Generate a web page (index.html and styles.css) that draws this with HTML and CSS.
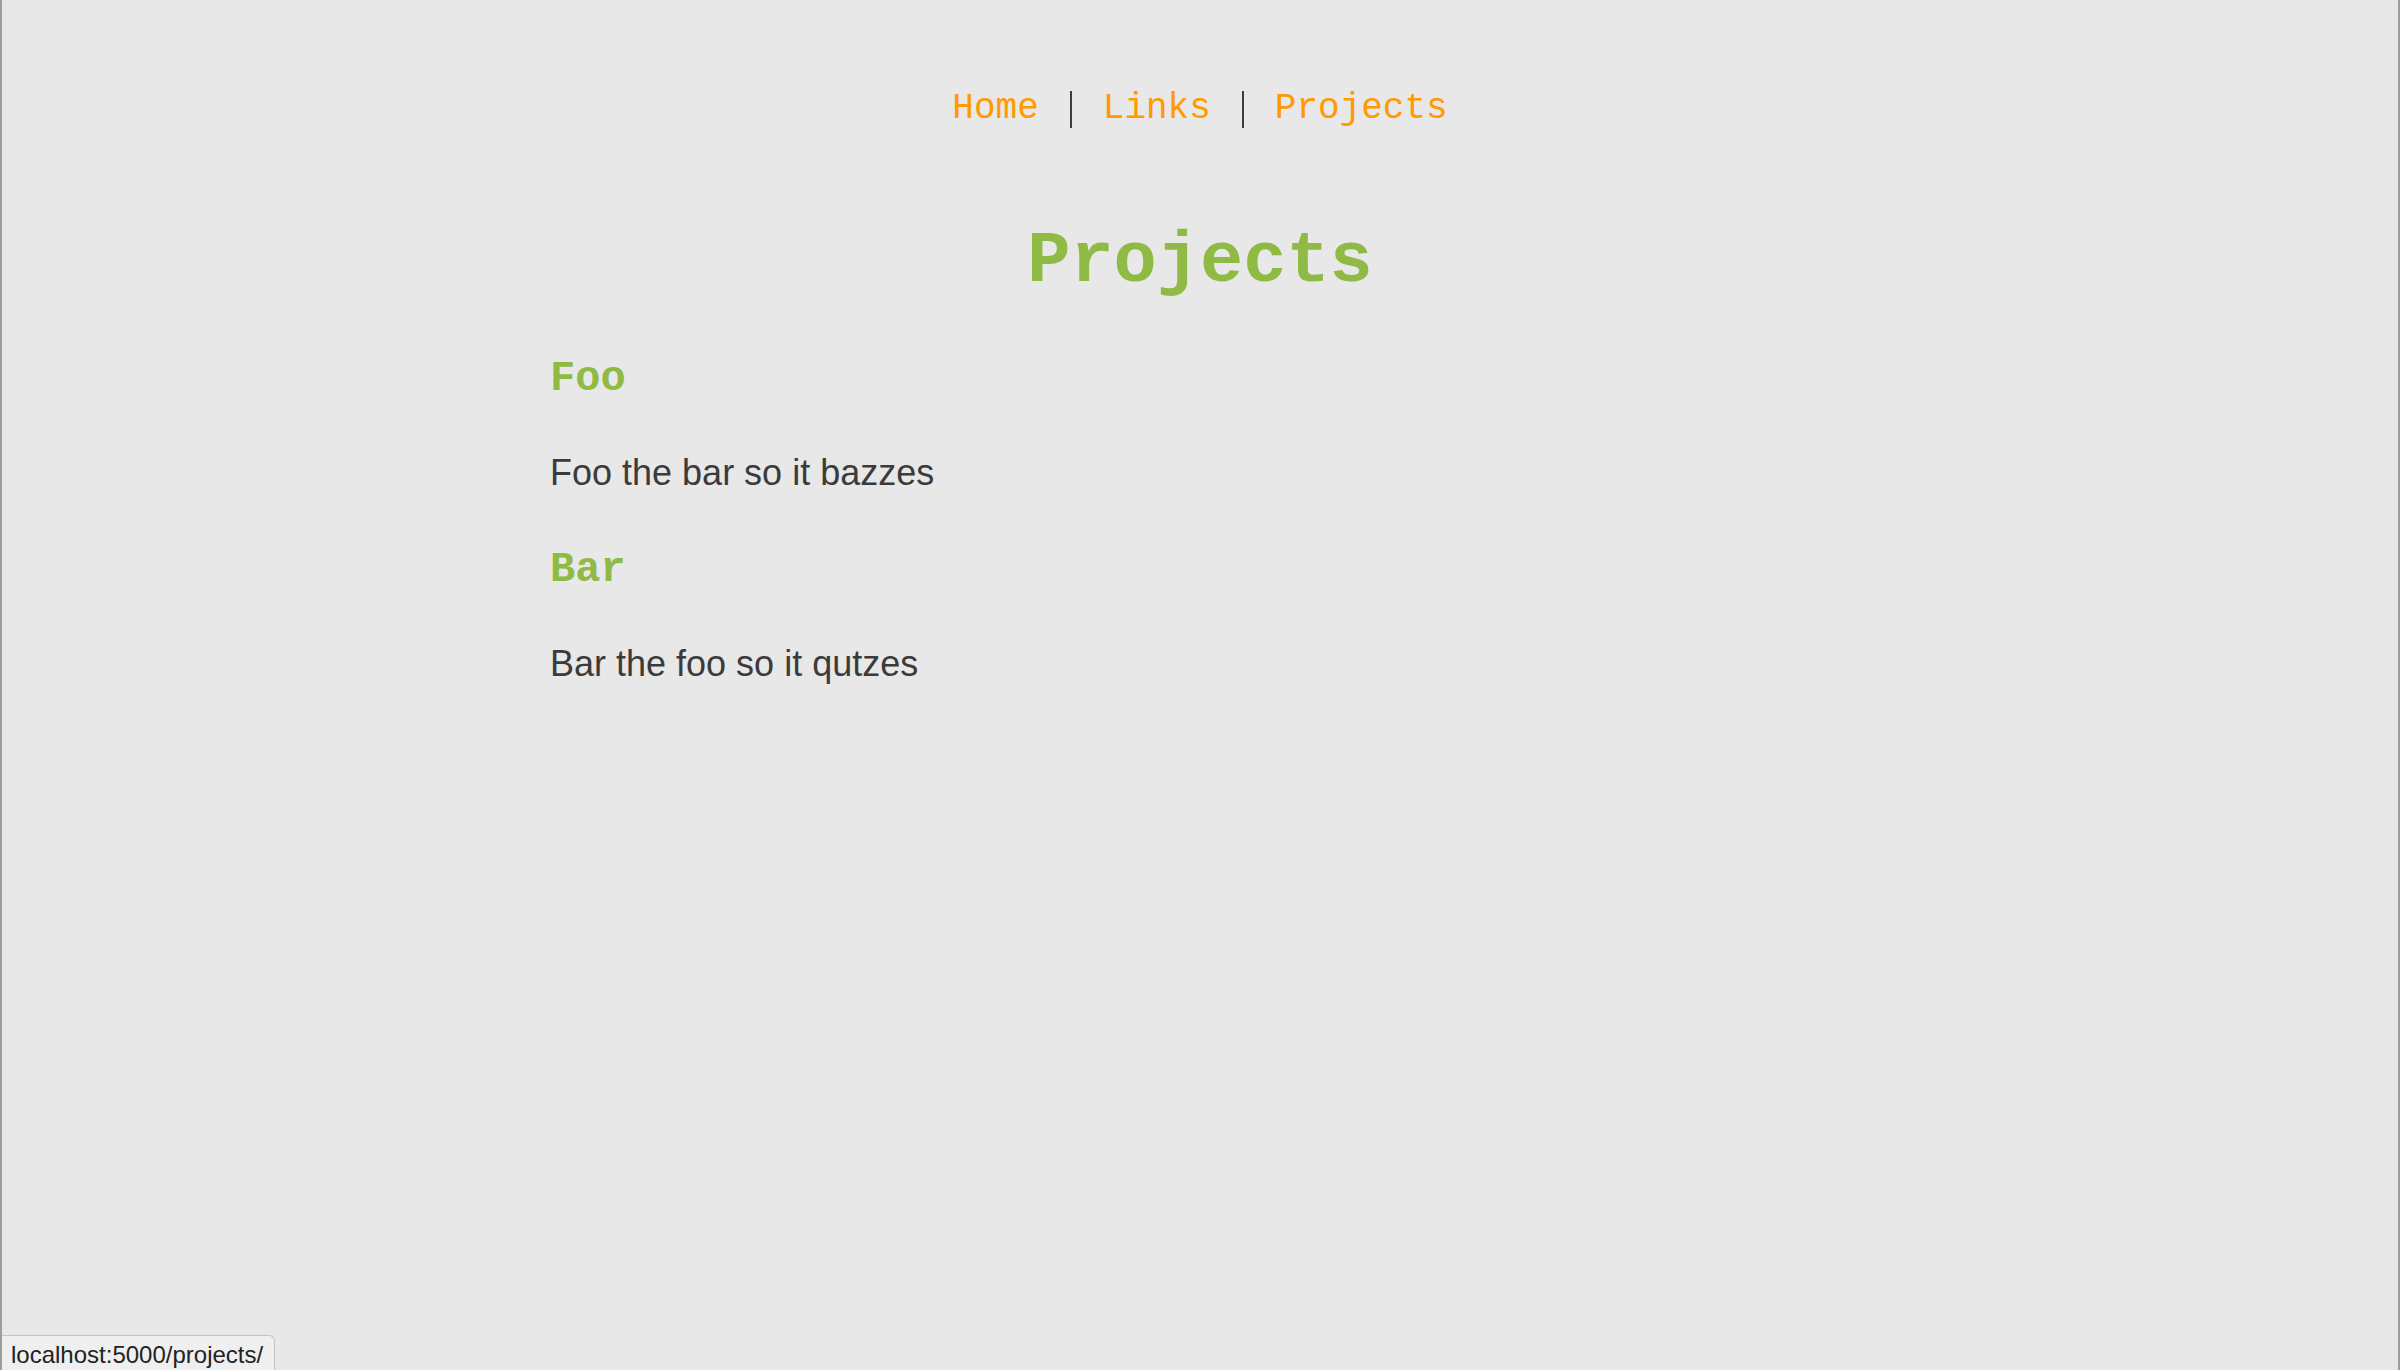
FILE: index.html
```html
<!DOCTYPE html>
<html lang="en">
<head>
<meta charset="utf-8">
<title>Projects</title>
<link rel="stylesheet" href="styles.css">
</head>
<body>
<div class="window">
  <div class="page">
    <nav class="nav">
      <a href="#">Home</a>
      <span class="sep"></span>
      <a href="#">Links</a>
      <span class="sep"></span>
      <a href="#">Projects</a>
    </nav>
    <h1 class="title">Projects</h1>
    <div class="projects">
      <section class="project">
        <h3 class="project-name">Foo</h3>
        <p class="project-desc">Foo the bar so it bazzes</p>
      </section>
      <section class="project">
        <h3 class="project-name">Bar</h3>
        <p class="project-desc">Bar the foo so it qutzes</p>
      </section>
    </div>
  </div>
</div>
<div class="status">localhost:5000/projects/</div>
</body>
</html>
```
FILE: styles.css
```css
html, body {
  margin: 0;
  padding: 0;
  background: #e8e8e8;
}

.window {
  box-sizing: border-box;
  min-height: 100vh;
  border-left: 2px solid #9d9d9d;
  border-right: 2px solid #9d9d9d;
  padding-top: 89px;
}

.page {
  width: 1300px;
  margin: 0 auto;
}

.nav {
  display: flex;
  justify-content: center;
  align-items: center;
  gap: 31px;
  font-family: "Liberation Mono", "Courier New", monospace;
  font-size: 36px;
  line-height: 40px;
}

.nav a {
  color: #ff9a00;
  text-decoration: none;
}

.sep {
  width: 2px;
  height: 37px;
  background: #3c3c3c;
}

.title {
  margin: 93px 0 0;
  text-align: center;
  font-family: "Liberation Mono", "Courier New", monospace;
  font-weight: bold;
  font-size: 72px;
  line-height: 80px;
  color: #8fbb45;
}

.projects {
  margin-top: 53px;
}

.project-name {
  margin: 0 0 50px;
  font-family: "Liberation Mono", "Courier New", monospace;
  font-weight: bold;
  font-size: 42px;
  line-height: 48px;
  color: #8fbb45;
}

.project-desc {
  margin: 0 0 53px;
  font-family: "Liberation Sans", Arial, sans-serif;
  font-size: 36px;
  line-height: 40px;
  color: #3b3b3b;
}

.status {
  position: fixed;
  left: 2px;
  bottom: 0;
  padding: 4px 11px 0 9px;
  line-height: 30px;
  font-family: "Liberation Sans", Arial, sans-serif;
  font-size: 24px;
  color: #222;
  background: #efefef;
  border: 1px solid #c4c4c4;
  border-bottom: none;
  border-left: none;
  border-radius: 0 6px 0 0;
}
```
